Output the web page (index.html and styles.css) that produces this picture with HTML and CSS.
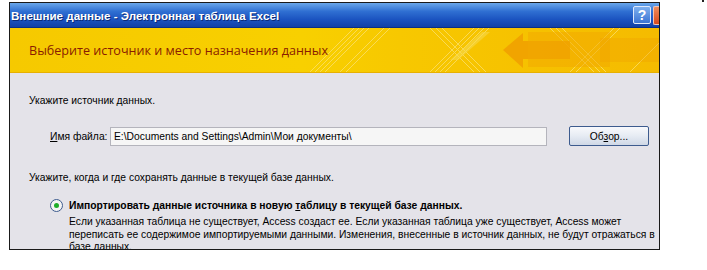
FILE: index.html
```html
<!DOCTYPE html>
<html lang="ru">

<head>
    <meta charset="UTF-8">
    <title>Внешние данные</title>
    <link rel="stylesheet" href="styles.css">
</head>

<body>
    <div class="corner-mark"></div>

    <div class="dialog">
        <!-- заголовок окна -->
        <div class="titlebar">
            <span class="title">Внешние данные - Электронная таблица Excel</span>
            <span class="help-btn">?</span>
            <span class="close-btn"></span>
        </div>

        <!-- жёлтая шапка -->
        <div class="banner">
            <svg class="banner-art" width="650" height="44" viewBox="0 0 650 44">
                <g stroke="#fbe27a" stroke-width="1" fill="none" opacity="0.7">
                    <path d="M300 44 L344 0 M305 44 L349 0 M310 44 L354 0 M315 44 L359 0" />
                    <path d="M330 44 L374 0 M336 44 L380 0" />
                    <path d="M420 44 L464 0 M425 44 L469 0 M430 44 L474 0 M435 44 L479 0" />
                    <path d="M420 0 L464 44 M426 0 L470 44 M432 0 L476 44" />
                    <path d="M540 0 L584 44 M546 0 L590 44 M552 0 L596 44" />
                    <path d="M560 44 L604 0 M566 44 L610 0 M620 44 L650 14" />
                </g>
                <path d="M440 32 L472 4 L480 4 L448 32 Z" fill="#f7d84a" opacity="0.6" />
                <polygon points="493,22 513,5 513,13 560,13 560,31 513,31 513,40" fill="#ef9a00" opacity="0.75" />
                <polygon points="518,4 600,4 600,39 518,39" fill="#f2a800" opacity="0.5" />
                <polygon points="590,10 650,10 650,34 590,34" fill="#f2a000" opacity="0.35" />
            </svg>
            <span class="banner-text">Выберите источник и место назначения данных</span>
        </div>

        <!-- содержимое -->
        <div class="content">
            <p class="label">Укажите источник данных.</p>

            <div class="file-row">
                <span class="file-label"><u>И</u>мя файла:</span>
                <div class="file-input">E:\Documents and Settings\Admin\Мои документы\</div>
                <button class="browse-btn">Об<u>з</u>ор...</button>
            </div>

            <p class="label">Укажите, когда и где сохранять данные в текущей базе данных.</p>

            <div class="option">
                <span class="radio"><span class="radio-dot"></span></span>
                <div class="option-text">
                    <div class="option-title">Импортировать данные источника в новую <u>т</u>аблицу в текущей базе данных.</div>
                    <div class="option-desc">Если указанная таблица не существует, Access создаст ее. Если указанная таблица уже существует, Access может переписать ее содержимое импортируемыми данными. Изменения, внесенные в источник данных, не будут отражаться в базе данных.</div>
                </div>
            </div>
        </div>
    </div>
</body>

</html>
```

FILE: styles.css
```css
body {
    margin: 0;
    background: #ffffff;
    font-family: "Liberation Sans", sans-serif;
    position: relative;
}

.corner-mark {
    position: absolute;
    left: 702px;
    top: 0;
    width: 2px;
    height: 2px;
    background: #222;
}

.dialog {
    margin: 2px 0 0 9px;
    width: 649px;
    height: 246px;
    border: 1px solid #1a1a1a;
    overflow: hidden;
    background: #e4e3e9;
}

/* заголовок */
.titlebar {
    height: 24px;
    display: flex;
    align-items: center;
    background: linear-gradient(to bottom, #6aa7ea 0%, #2f6fd2 35%, #1a52bf 70%, #1241a6 100%);
    border-bottom: 1px solid #0b2f86;
}

.title {
    flex: 1;
    color: #ffffff;
    font-family: "Liberation Sans", sans-serif;
    font-weight: bold;
    font-size: 11.6px;
    padding-left: 1px;
    text-shadow: 1px 1px 0 #0a2a78;
}

.help-btn {
    width: 16px;
    height: 16px;
    margin-right: 2px;
    border: 1px solid #dfe9fb;
    border-radius: 2px;
    background: linear-gradient(to bottom, #7fb0ee, #3b74d4);
    color: #fff;
    font-family: "Liberation Sans", sans-serif;
    font-weight: bold;
    font-size: 14px;
    line-height: 16px;
    text-align: center;
}

.close-btn {
    width: 5px;
    height: 17px;
    border: 1px solid #f3c3b0;
    border-right: none;
    border-radius: 2px 0 0 2px;
    background: linear-gradient(to bottom, #ef8c5c, #d84a1c);
}

/* шапка */
.banner {
    height: 44px;
    position: relative;
    display: flex;
    align-items: center;
    background: linear-gradient(to right, #f6c900 0%, #f8d000 45%, #f7c800 60%, #f5bb00 100%);
    border-bottom: 1px solid #e7b000;
}

.banner-art {
    position: absolute;
    left: 0;
    top: 0;
}

.banner-text {
    position: relative;
    padding-left: 19px;
    color: #8a1c00;
    font-family: "Open Sans", sans-serif;
    font-size: 12.6px;
}

/* содержимое */
.content {
    padding: 21px 0 0 19px;
    font-family: "Liberation Sans", sans-serif;
    font-size: 10.3px;
    color: #000;
}

.label {
    margin: 0;
    line-height: 13px;
}

.file-row {
    display: flex;
    align-items: center;
    height: 20px;
    margin: 19px 0 25px 21px;
}

.file-label {
    width: 60px;
    white-space: nowrap;
}

.file-input {
    width: 432px;
    height: 17px;
    line-height: 17px;
    padding-left: 3px;
    border: 1px solid #b4b4bc;
    background: #f6f6f6;
}

.browse-btn {
    margin-left: 22px;
    width: 80px;
    height: 20px;
    padding: 0;
    border: 1px solid #3d5b8e;
    border-radius: 2px;
    background: linear-gradient(to bottom, #f8f9fc 0%, #e6ebf3 50%, #cfd8e6 100%);
    font-family: "Liberation Sans", sans-serif;
    font-size: 10.3px;
    color: #000;
}

.option {
    display: flex;
    margin: 15px 0 0 21px;
}

.radio {
    width: 11px;
    height: 11px;
    margin-top: 0;
    border: 1px solid #3d5b8e;
    border-radius: 50%;
    background: #f4f4f4;
    display: flex;
    align-items: center;
    justify-content: center;
}

.radio-dot {
    width: 5px;
    height: 5px;
    border-radius: 50%;
    background: #1fae2a;
}

.option-text {
    margin-left: 6px;
    width: 568px;
}

.option-title {
    font-weight: bold;
    line-height: 13px;
}

.option-desc {
    margin-top: 4px;
    line-height: 12.5px;
    padding-right: 0;
    margin-right: -20px;
}
```
